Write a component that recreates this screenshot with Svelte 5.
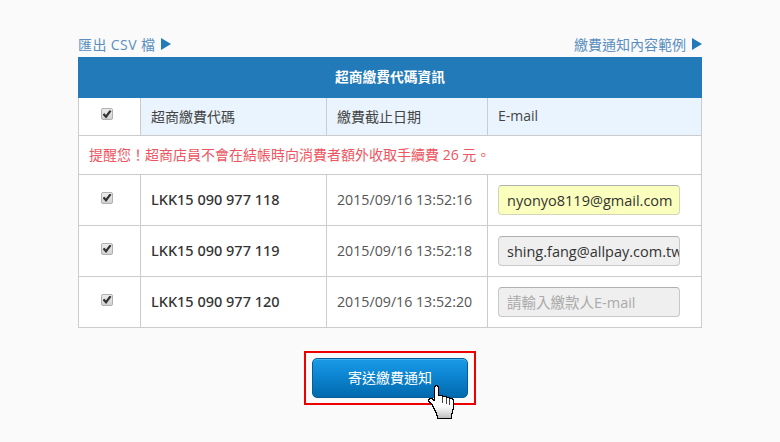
<script>
  const rows = [
    { code: 'LKK15 090 977 118', date: '2015/09/16 13:52:16', email: 'nyonyo8119@gmail.com', cls: 'filled' },
    { code: 'LKK15 090 977 119', date: '2015/09/16 13:52:18', email: 'shing.fang@allpay.com.tw', cls: 'plain' },
    { code: 'LKK15 090 977 120', date: '2015/09/16 13:52:20', email: '', cls: 'empty' }
  ];
</script>

<main class="page">
  <div class="links">
    <a class="csv" href="#csv">匯出 CSV 檔<i class="tri"></i></a>
    <a href="#sample">繳費通知內容範例<i class="tri"></i></a>
  </div>

  <table>
    <colgroup>
      <col class="c1" /><col class="c2" /><col class="c3" /><col />
    </colgroup>
    <thead>
      <tr class="title"><th colspan="4">超商繳費代碼資訊</th></tr>
      <tr class="heads">
        <th class="white"><input type="checkbox" checked /></th>
        <th>超商繳費代碼</th>
        <th>繳費截止日期</th>
        <th>E-mail</th>
      </tr>
    </thead>
    <tbody>
      <tr class="notice"><td colspan="4">提醒您！超商店員不會在結帳時向消費者額外收取手續費 26 元。</td></tr>
      {#each rows as row}
        <tr class="data">
          <td class="box"><input type="checkbox" checked /></td>
          <td class="code">{row.code}</td>
          <td class="date">{row.date}</td>
          <td class="mail">
            <input class="field {row.cls}" type="text" value={row.email} placeholder="請輸入繳款人E-mail" />
          </td>
        </tr>
      {/each}
    </tbody>
  </table>

  <div class="actions">
    <div class="highlight">
      <button type="button">寄送繳費通知</button>
      <svg class="hand" width="27" height="35" viewBox="0 0 27 35" shape-rendering="crispEdges" aria-hidden="true">
        <defs>
          <linearGradient id="g" x1="0" y1="0" x2="0" y2="1">
            <stop offset="0" stop-color="#ffffff" />
            <stop offset="0.65" stop-color="#fbfbfb" />
            <stop offset="1" stop-color="#bdbdbd" />
          </linearGradient>
        </defs>
        <path d="M8 .5h2v1h1v9h4v1h4v1h3v1h3v1h1v10h-1v4h-1v5H10v-3H9v-3H8v-2H7v-2H6v-2H5v-2H4v-1H3v-1H2v-1H1v-2h1v-1h3v1h1v1h1V1.500h1z" fill="url(#g)" stroke="#000" stroke-width="1" />
        <path d="M15.500 12v6M19.500 13v6M22.500 14v6" stroke="#444" stroke-width="1" fill="none" />
      </svg>
    </div>
  </div>
</main>

<style>
  :global(body) {
    margin: 0;
    background: #fafafa;
  }
  .page {
    width: 624px;
    height: 442px;
    margin: 0 auto;
    padding-top: 32px;
    box-sizing: border-box;
    font-family: "Open Sans", "Noto Sans CJK TC", sans-serif;
    color: #444;
  }
  .links {
    display: flex;
    justify-content: space-between;
    align-items: center;
    height: 25px;
    padding-bottom: 2px;
    box-sizing: border-box;
    font-size: 14px;
  }
  .links a {
    display: flex;
    align-items: center;
    color: #5b8fbf;
    text-decoration: none;
  }
  .links a.csv {
    letter-spacing: 0.4px;
  }
  .tri {
    width: 0;
    height: 0;
    margin-left: 6px;
    border-left: 10px solid #227ab9;
    border-top: 6px solid transparent;
    border-bottom: 6px solid transparent;
  }
  table {
    width: 624px;
    border-collapse: collapse;
    table-layout: fixed;
    background: #fff;
    font-size: 14px;
  }
  .c1 { width: 62px; }
  .c2 { width: 186px; }
  .c3 { width: 161px; }
  th, td {
    border: 1px solid #cccccc;
    padding: 0 10px;
    font-weight: 400;
    text-align: left;
    box-sizing: border-box;
  }
  .title th {
    height: 40px;
    padding-bottom: 3px;
    background: #227ab9;
    border-color: #227ab9;
    color: #fff;
    font-size: 13.750px;
    font-weight: 700;
    text-align: center;
  }
  .heads th {
    height: 38px;
    padding-bottom: 2px;
    background: #e9f4fe;
    font-size: 14px;
    color: #444;
  }
  .heads th.white {
    background: #fff;
    text-align: center;
    padding: 0;
  }
  .notice td {
    height: 39px;
    padding-bottom: 2px;
    font-size: 14px;
    color: #ee5560;
  }
  .data td {
    height: 51px;
  }
  .box {
    text-align: center;
    padding: 0;
  }
  .code {
    padding-bottom: 3px;
    font-family: "Noto Sans", sans-serif;
    font-size: 14.500px;
    font-weight: 500;
    color: #333;
  }
  .date {
    padding-bottom: 2px;
    font-size: 14.200px;
    color: #555;
  }
  input[type="checkbox"] {
    appearance: none;
    display: block;
    position: relative;
    left: -3px;
    width: 12px;
    height: 12px;
    margin: -5px auto 0;
    border: 1px solid #b0b0b0;
    border-radius: 2px;
    background: linear-gradient(#ececec, #d2d2d2);
    box-sizing: border-box;
  }
  input[type="checkbox"]::before {
    content: "";
    position: absolute;
    inset: 1px 0 0 1px;
    background: #333;
    clip-path: polygon(0 50%, 22% 35%, 38% 55%, 80% 0, 100% 15%, 40% 95%);
  }
  .field {
    display: block;
    width: 182px;
    height: 30px;
    margin: 0;
    padding: 0 0 0 8px;
    box-sizing: border-box;
    border: 1px solid #c8c8c8;
    border-top-color: #b0b0b0;
    border-radius: 4px;
    background: #efefef;
    font: 14.500px "Open Sans", "Noto Sans CJK TC", sans-serif;
    color: #333;
    outline: none;
  }
  .field.filled {
    background: #fbffbd;
    border-color: #d5d5b5;
    border-top-color: #b0b0b0;
  }
  .field::placeholder {
    color: #aaa;
    opacity: 1;
  }
  .actions {
    display: flex;
    justify-content: center;
    padding-top: 23px;
  }
  .highlight {
    position: relative;
    display: flex;
    align-items: center;
    justify-content: center;
    width: 172px;
    height: 54px;
    box-sizing: border-box;
    border: 2px solid #ee0000;
  }
  button {
    width: 156px;
    height: 40px;
    padding: 0 0 2px;
    border: 1px solid #075d96;
    border-radius: 5px;
    background: linear-gradient(#1a9ae6, #0f8ad6 35%, #0069ae);
    box-shadow: inset 0 1px 0 #3fb4f5;
    color: #fff;
    font: 14px "Noto Sans CJK TC", sans-serif;
  }
  .hand {
    position: absolute;
    left: 121px;
    top: 32px;
  }
</style>
